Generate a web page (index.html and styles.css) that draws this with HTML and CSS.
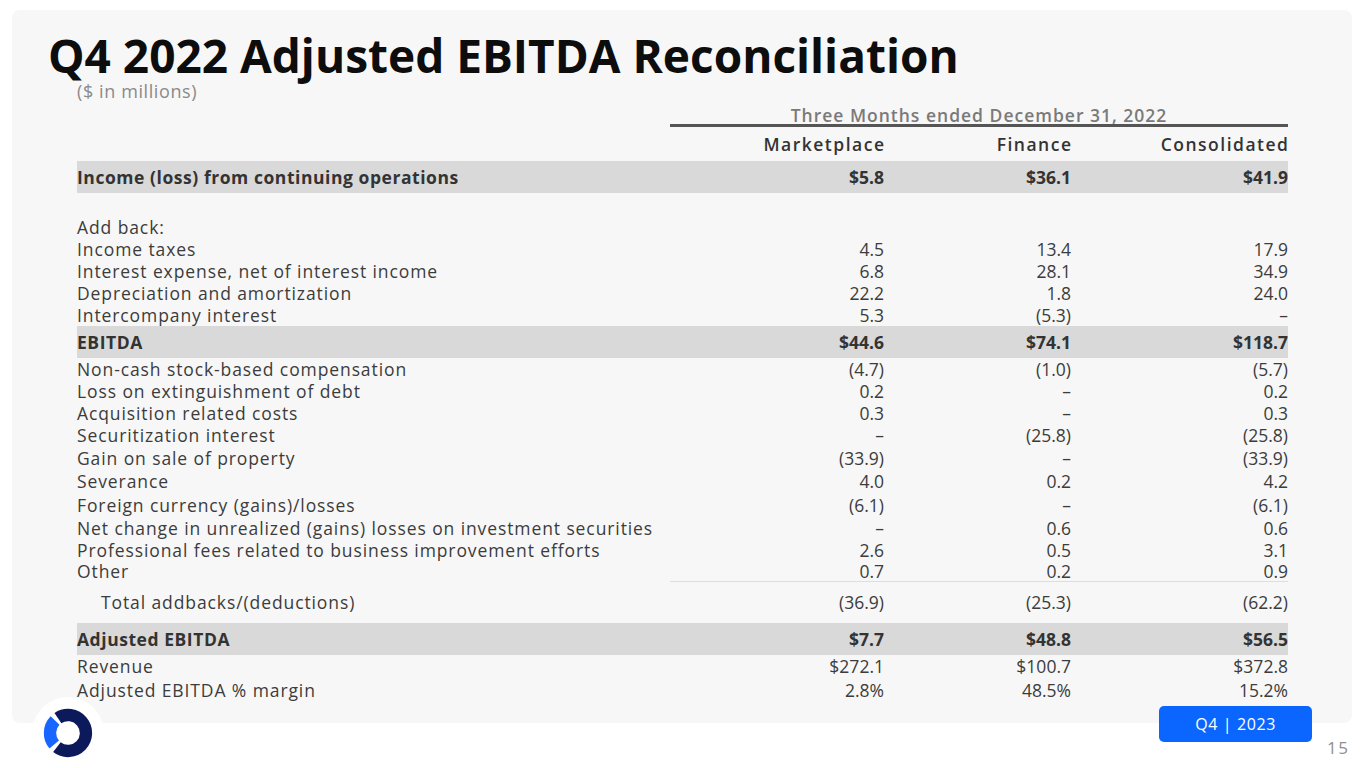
FILE: index.html
```html
<!DOCTYPE html>
<html lang="en">
<head>
<meta charset="utf-8">
<title>Q4 2022 Adjusted EBITDA Reconciliation</title>
<link rel="stylesheet" href="styles.css">
</head>
<body>
<div class="slide">
  <div class="card">
    <h1 class="title">Q4 2022 Adjusted EBITDA Reconciliation</h1>
    <div class="subtitle">($ in millions)</div>
    <div class="table">
      <div class="row head-top">
        <div class="cell label"></div>
        <div class="period">Three Months ended December 31, 2022</div>
      </div>
      <div class="row head">
        <div class="cell label"></div>
        <div class="cell num">Marketplace</div>
        <div class="cell num">Finance</div>
        <div class="cell num">Consolidated</div>
      </div>
      <div class="row band">
        <div class="cell label">Income (loss) from continuing operations</div>
        <div class="cell num">$5.8</div>
        <div class="cell num">$36.1</div>
        <div class="cell num">$41.9</div>
      </div>
      <div class="row spacer"></div>
      <div class="row">
        <div class="cell label">Add back:</div>
      </div>
      <div class="row">
        <div class="cell label">Income taxes</div>
        <div class="cell num">4.5</div>
        <div class="cell num">13.4</div>
        <div class="cell num">17.9</div>
      </div>
      <div class="row">
        <div class="cell label">Interest expense, net of interest income</div>
        <div class="cell num">6.8</div>
        <div class="cell num">28.1</div>
        <div class="cell num">34.9</div>
      </div>
      <div class="row">
        <div class="cell label">Depreciation and amortization</div>
        <div class="cell num">22.2</div>
        <div class="cell num">1.8</div>
        <div class="cell num">24.0</div>
      </div>
      <div class="row">
        <div class="cell label">Intercompany interest</div>
        <div class="cell num">5.3</div>
        <div class="cell num">(5.3)</div>
        <div class="cell num">–</div>
      </div>
      <div class="row band">
        <div class="cell label">EBITDA</div>
        <div class="cell num">$44.6</div>
        <div class="cell num">$74.1</div>
        <div class="cell num">$118.7</div>
      </div>
      <div class="row">
        <div class="cell label">Non-cash stock-based compensation</div>
        <div class="cell num">(4.7)</div>
        <div class="cell num">(1.0)</div>
        <div class="cell num">(5.7)</div>
      </div>
      <div class="row">
        <div class="cell label">Loss on extinguishment of debt</div>
        <div class="cell num">0.2</div>
        <div class="cell num">–</div>
        <div class="cell num">0.2</div>
      </div>
      <div class="row">
        <div class="cell label">Acquisition related costs</div>
        <div class="cell num">0.3</div>
        <div class="cell num">–</div>
        <div class="cell num">0.3</div>
      </div>
      <div class="row">
        <div class="cell label">Securitization interest</div>
        <div class="cell num">–</div>
        <div class="cell num">(25.8)</div>
        <div class="cell num">(25.8)</div>
      </div>
      <div class="row tall">
        <div class="cell label">Gain on sale of property</div>
        <div class="cell num">(33.9)</div>
        <div class="cell num">–</div>
        <div class="cell num">(33.9)</div>
      </div>
      <div class="row tall">
        <div class="cell label">Severance</div>
        <div class="cell num">4.0</div>
        <div class="cell num">0.2</div>
        <div class="cell num">4.2</div>
      </div>
      <div class="row tall">
        <div class="cell label">Foreign currency (gains)/losses</div>
        <div class="cell num">(6.1)</div>
        <div class="cell num">–</div>
        <div class="cell num">(6.1)</div>
      </div>
      <div class="row">
        <div class="cell label">Net change in unrealized (gains) losses on investment securities</div>
        <div class="cell num">–</div>
        <div class="cell num">0.6</div>
        <div class="cell num">0.6</div>
      </div>
      <div class="row">
        <div class="cell label">Professional fees related to business improvement efforts</div>
        <div class="cell num">2.6</div>
        <div class="cell num">0.5</div>
        <div class="cell num">3.1</div>
      </div>
      <div class="row rule">
        <div class="cell label">Other</div>
        <div class="cell num">0.7</div>
        <div class="cell num">0.2</div>
        <div class="cell num">0.9</div>
      </div>
      <div class="row total">
        <div class="cell label indent">Total addbacks/(deductions)</div>
        <div class="cell num">(36.9)</div>
        <div class="cell num">(25.3)</div>
        <div class="cell num">(62.2)</div>
      </div>
      <div class="row band">
        <div class="cell label">Adjusted EBITDA</div>
        <div class="cell num">$7.7</div>
        <div class="cell num">$48.8</div>
        <div class="cell num">$56.5</div>
      </div>
      <div class="row tall">
        <div class="cell label">Revenue</div>
        <div class="cell num">$272.1</div>
        <div class="cell num">$100.7</div>
        <div class="cell num">$372.8</div>
      </div>
      <div class="row tall">
        <div class="cell label">Adjusted EBITDA % margin</div>
        <div class="cell num">2.8%</div>
        <div class="cell num">48.5%</div>
        <div class="cell num">15.2%</div>
      </div>
    </div>
  </div>
  <div class="footer">
    <div class="logo">
      <svg width="72" height="72" viewBox="0 0 72 72" aria-hidden="true">
        <circle cx="36" cy="36" r="36" fill="#ffffff"/>
        <path d="M25.93 21.08 A18 18 0 1 1 24.92 50.18" fill="none" stroke="#0c1a5c" stroke-width="12.3"/>
        <path d="M22.21 47.57 A18 18 0 0 1 23.05 23.5" fill="none" stroke="#1766ff" stroke-width="12.3"/>
      </svg>
    </div>
    <div class="footer-right">
      <div class="badge">Q4 | 2023</div>
      <div class="pagenum">15</div>
    </div>
  </div>
</div>
</body>
</html>
```

FILE: styles.css
```css
html, body {
  margin: 0;
  padding: 0;
  background: #ffffff;
}

.slide {
  width: 1365px;
  height: 768px;
  position: relative;
  overflow: hidden;
  font-family: "Open Sans", "Liberation Sans", sans-serif;
  color: #3c3c3c;
}

.card {
  margin: 10px 13px 0 12px;
  height: 713px;
  background: #f7f7f7;
  border-radius: 8px;
  padding: 22px 64px 0 36px;
  box-sizing: border-box;
}

.title {
  margin: 0;
  font-size: 46px;
  line-height: 46px;
  font-weight: 700;
  color: #0d0d0d;
  white-space: nowrap;
}

.subtitle {
  margin: 3px 0 0 29px;
  font-size: 18px;
  line-height: 20px;
  letter-spacing: 0.6px;
  color: #8a8a8a;
}

.table {
  margin-left: 29px;
  margin-top: 1px;
}

.row {
  display: grid;
  grid-template-columns: 593px 214px 187px 217px;
  height: 22px;
  align-items: center;
  font-size: 17.5px;
  line-height: 22px;
}

.cell.num {
  text-align: right;
  white-space: nowrap;
}

.cell.label {
  white-space: nowrap;
  letter-spacing: 0.9px;
}

.head-top {
  height: 25px;
}

.period {
  grid-column: 2 / 5;
  text-align: center;
  font-weight: 600;
  color: #7a7a7a;
  letter-spacing: 1px;
  border-bottom: 3px solid #555555;
  line-height: 17px;
  align-self: end;
  white-space: nowrap;
}

.head {
  height: 34px;
  font-weight: 600;
  color: #333333;
}

.head .cell.num {
  letter-spacing: 1.5px;
  margin-right: -1.5px;
}

.band {
  height: 32px;
  background: #d9d9d9;
  font-weight: 700;
  color: #333333;
}

.band .cell.label {
  letter-spacing: 0.55px;
}

.spacer {
  height: 23px;
}

.tall {
  height: 23.5px;
}

.rule {
  grid-template-rows: 20px 1px;
  align-content: start;
  line-height: 20px;
}

.rule .cell {
  padding-top: 1px;
}

.rule::after {
  content: "";
  grid-column: 2 / 5;
  grid-row: 2;
  height: 1px;
  background: #dedede;
}

.total {
  height: 40px;
  align-items: start;
  padding-top: 8px;
  box-sizing: border-box;
}

.indent {
  padding-left: 24px;
}

.footer {
  display: flex;
  justify-content: space-between;
  align-items: flex-start;
  padding: 0 17px 0 32px;
  margin-top: -26px;
}

.logo {
  width: 72px;
  height: 72px;
}

.logo svg {
  display: block;
}

.footer-right {
  display: flex;
  align-items: flex-start;
  gap: 15px;
  padding-top: 9px;
}

.badge {
  width: 153px;
  height: 36px;
  background: #0b66ff;
  border-radius: 5px;
  color: #ffffff;
  font-size: 16px;
  line-height: 36px;
  letter-spacing: 0.6px;
  text-align: center;
}

.pagenum {
  margin-top: 32px;
  font-size: 17px;
  line-height: 20px;
  letter-spacing: 1.5px;
  margin-right: -1.5px;
  color: #8f8f8f;
}
```
